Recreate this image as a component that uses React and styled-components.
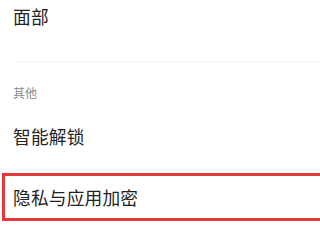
import React from "react";
import styled, { createGlobalStyle } from "styled-components";

const Global = createGlobalStyle`
  html, body { margin: 0; padding: 0; background: #ffffff; }
  body { font-family: "Noto Sans CJK SC", "Noto Sans", sans-serif; overflow: hidden; }
`;

const Page = styled.div`
  width: 320px;
  height: 240px;
  overflow: hidden;
  background: #ffffff;
  display: flex;
  flex-direction: column;
`;

const Row = styled.div`
  height: ${(p) => p.$h}px;
  display: flex;
  align-items: center;
  padding-left: 13px;
  font-size: 17.7px;
  color: #222222;
  letter-spacing: 0.2px;
  flex-shrink: 0;
`;

const Divider = styled.div`
  height: 1px;
  margin: 0 0 0 13px;
  background: #f5f3f1;
  flex-shrink: 0;
`;

const SectionHeader = styled.div`
  height: 50px;
  box-sizing: border-box;
  padding: 22px 0 0 13px;
  font-size: 12px;
  line-height: 17px;
  color: #8a8a8a;
  flex-shrink: 0;
`;

const Highlight = styled.div`
  margin-left: 2px;
  margin-right: -20px;
  height: 42px;
  border: 3px solid #e5383b;
  display: flex;
  align-items: center;
  padding-left: 8px;
  font-size: 17.7px;
  color: #222222;
  letter-spacing: 0.2px;
  flex-shrink: 0;
`;

const Spacer = styled.div`
  height: ${(p) => p.$h}px;
  flex-shrink: 0;
`;

export default function App() {
  return (
    <Page>
      <Global />
      <Row $h={32}>面部</Row>
      <Spacer $h={29} />
      <Divider />
      <SectionHeader>其他</SectionHeader>
      <Row $h={47}>智能解锁</Row>
      <Spacer $h={14} />
      <Highlight>隐私与应用加密</Highlight>
    </Page>
  );
}
